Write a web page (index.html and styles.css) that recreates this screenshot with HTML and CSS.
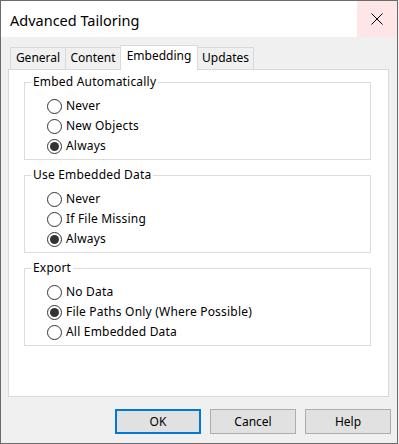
FILE: index.html
```html
<!DOCTYPE html>
<html lang="en">
<head>
    <meta charset="UTF-8">
    <title>Advanced Tailoring</title>
    <link rel="stylesheet" href="styles.css">
</head>
<body>
    <div class="window">
        <div class="titlebar">
            <span class="title">Advanced Tailoring</span>
            <div class="close">
                <svg width="12" height="12" viewBox="0 0 12 12">
                    <path d="M0.5 0.5 L11.5 11.5 M11.5 0.5 L0.5 11.5" stroke="#000" stroke-width="1" fill="none"/>
                </svg>
            </div>
        </div>

        <div class="client">
            <div class="tabs">
                <div class="tab">General</div>
                <div class="tab">Content</div>
                <div class="tab active">Embedding</div>
                <div class="tab">Updates</div>
            </div>

            <div class="panel">
                <fieldset class="group">
                    <legend>Embed Automatically</legend>
                    <div class="options">
                        <div class="option"><span class="radio"></span>Never</div>
                        <div class="option"><span class="radio"></span>New Objects</div>
                        <div class="option"><span class="radio checked"></span>Always</div>
                    </div>
                </fieldset>

                <fieldset class="group">
                    <legend>Use Embedded Data</legend>
                    <div class="options">
                        <div class="option"><span class="radio"></span>Never</div>
                        <div class="option"><span class="radio"></span>If File Missing</div>
                        <div class="option"><span class="radio checked"></span>Always</div>
                    </div>
                </fieldset>

                <fieldset class="group">
                    <legend>Export</legend>
                    <div class="options">
                        <div class="option"><span class="radio"></span>No Data</div>
                        <div class="option"><span class="radio checked"></span>File Paths Only (Where Possible)</div>
                        <div class="option"><span class="radio"></span>All Embedded Data</div>
                    </div>
                </fieldset>
            </div>

            <div class="buttons">
                <button class="btn default">OK</button>
                <button class="btn">Cancel</button>
                <button class="btn">Help</button>
            </div>
        </div>
    </div>
</body>
</html>
```

FILE: styles.css
```css
* {
    box-sizing: border-box;
}

body {
    margin: 0;
    font-family: "Noto Sans", "Open Sans", sans-serif;
    font-size: 12px;
    line-height: 16px;
    letter-spacing: 0.2px;
    color: #000;
    background: #f0f0f0;
}

.window {
    width: 398px;
    height: 444px;
    border: 1px solid #6b6b6b;
    background: #f0f0f0;
    display: flex;
    flex-direction: column;
}

.titlebar {
    height: 36px;
    flex-shrink: 0;
    background: #fff;
    display: flex;
    align-items: center;
}

.title {
    flex: 1;
    padding-left: 9px;
    padding-top: 1px;
    font-size: 14.5px;
    letter-spacing: 0;
}

.close {
    width: 40px;
    height: 36px;
    background: #ffe6e6;
    display: flex;
    align-items: center;
    justify-content: center;
}

.client {
    flex: 1;
    padding: 8px 8px 0 7px;
    display: flex;
    flex-direction: column;
}

/* tab strip */
.tabs {
    display: flex;
    align-items: flex-end;
    height: 24px;
    padding-left: 2px;
}

.tab {
    height: 22px;
    min-width: 56px;
    padding: 0 4px 1px;
    margin-left: -1px;
    border: 1px solid #d9d9d9;
    border-bottom: none;
    background: #f0f0f0;
    display: flex;
    align-items: center;
    justify-content: center;
    letter-spacing: 0;
}

.tab:first-child {
    margin-left: 0;
}

.tab.active {
    height: 25px;
    min-width: 78px;
    margin-bottom: -1px;
    padding-bottom: 4px;
    background: #fff;
    position: relative;
    z-index: 1;
}

.panel {
    height: 328px;
    border: 1px solid #d9d9d9;
    background: #fff;
    padding: 4px 17px 0 15px;
}

/* group boxes */
.group {
    margin: 0 0 7px;
    padding: 6px 0 3px 6px;
    border: 1px solid #dcdcdc;
    min-width: 0;
}

.group legend {
    padding: 0 2px;
    line-height: 16px;
}

.options {
    padding-left: 16px;
}

.option {
    height: 20px;
    display: flex;
    align-items: center;
    gap: 4px;
}

.radio {
    width: 15px;
    height: 15px;
    flex-shrink: 0;
    border: 1px solid #333;
    border-radius: 50%;
    display: flex;
    align-items: center;
    justify-content: center;
}

.radio.checked::after {
    content: "";
    width: 9px;
    height: 9px;
    border-radius: 50%;
    background: #333;
}

/* dialog buttons */
.buttons {
    display: flex;
    justify-content: flex-end;
    gap: 9px;
    margin-top: 12px;
    margin-right: -2px;
}

.btn {
    width: 86px;
    height: 25px;
    border: 1px solid #adadad;
    background: #e1e1e1;
    font-family: inherit;
    font-size: 12px;
    color: #000;
    padding: 0;
}

.btn.default {
    border: 2px solid #0078d7;
}
```
